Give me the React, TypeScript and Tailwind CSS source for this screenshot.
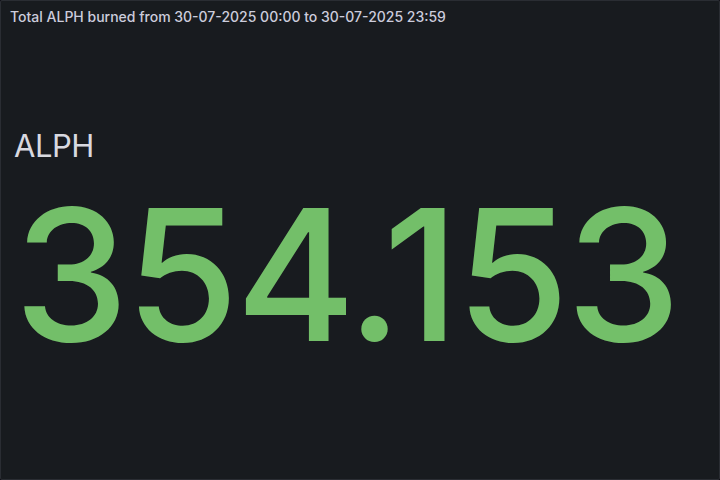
import React from 'react';

export default function App() {
  const panel = {
    title: 'Total ALPH burned from 30-07-2025 00:00 to 30-07-2025 23:59',
    unit: 'ALPH',
    value: '354.153',
  };

  return (
    <div
      className="w-[720px] h-[480px] bg-[#111217] overflow-hidden"
      style={{ fontFamily: 'Inter, "Noto Sans", sans-serif' }}
    >
      <div className="w-full h-full bg-[#181b1f] border border-[#2a2d33] rounded-[2px] flex flex-col">
        {/* Header */}
        <div className="h-[32px] flex items-center px-[9px] shrink-0">
          <h2 className="text-[14px] font-medium text-[#ccccdc] leading-none">{panel.title}</h2>
        </div>

        {/* Stat */}
        <div className="flex-1 flex flex-col justify-center px-[13px] pb-[16px]">
          <div className="text-[31px] leading-none text-[#d8d9e0] mb-[22px] tracking-[-0.5px]">{panel.unit}</div>
          <div className="text-[183px] leading-[1] font-medium text-[#73bf69] tracking-[-3px]">
            {panel.value}
          </div>
        </div>
      </div>
    </div>
  );
}
